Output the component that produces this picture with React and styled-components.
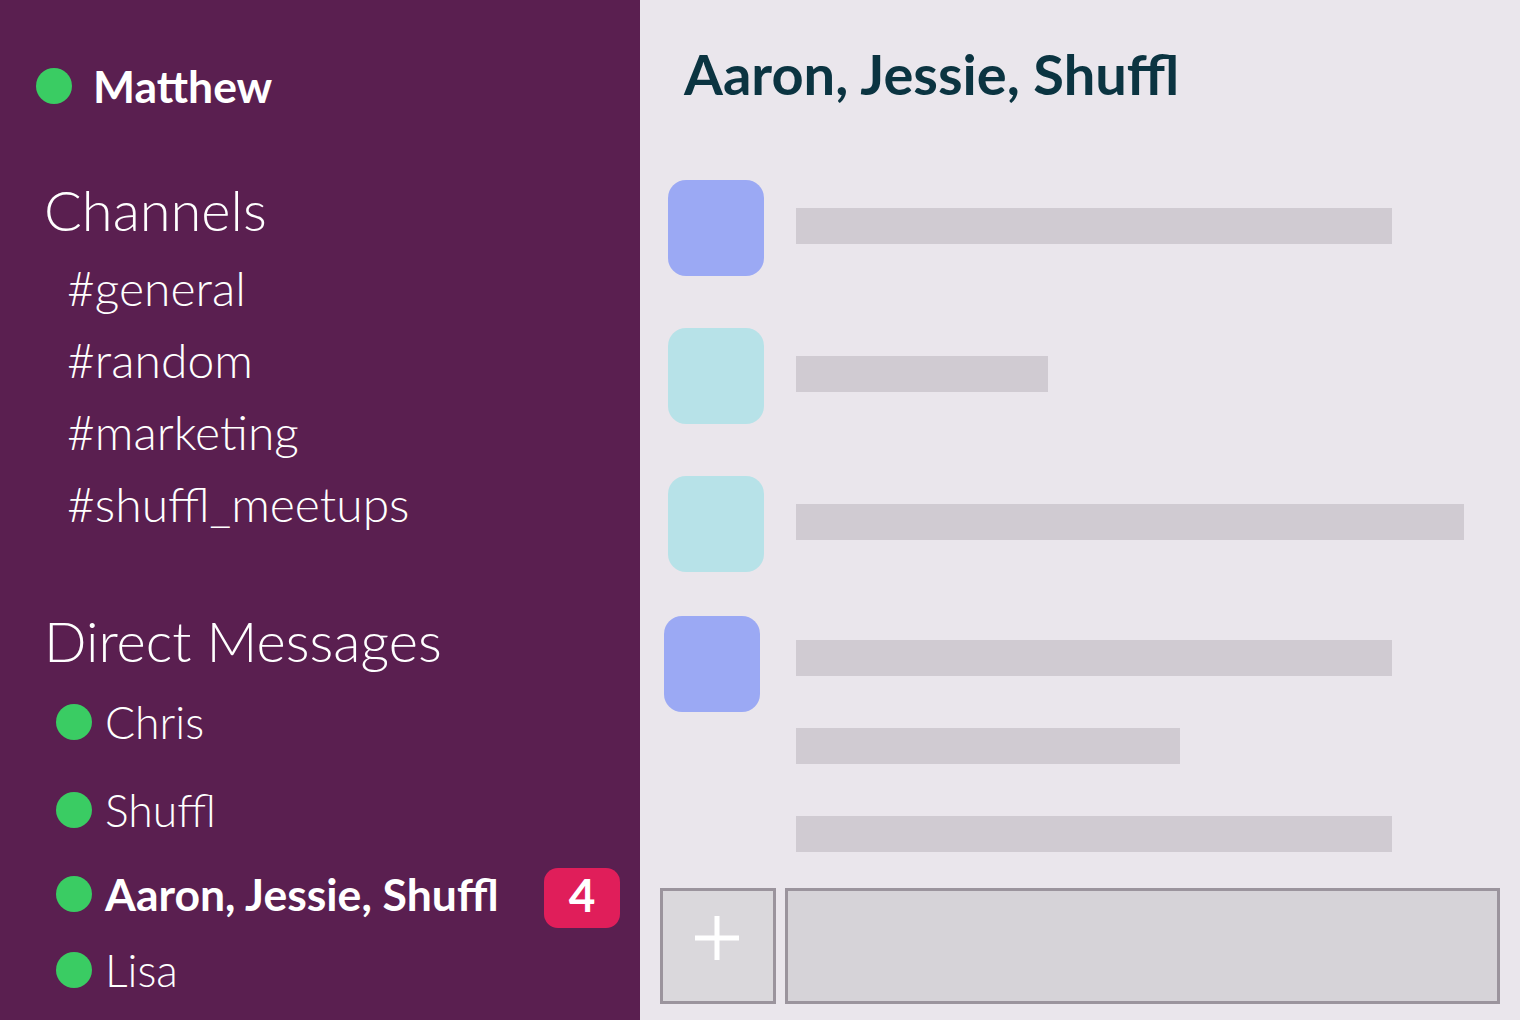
import styled, { createGlobalStyle } from "styled-components";

const GlobalStyle = createGlobalStyle`
  html, body {
    margin: 0;
    padding: 0;
    background: #eae6ec;
  }
  body {
    font-family: Lato, "Noto Sans", sans-serif;
  }
`;

const Layout = styled.div`
  display: flex;
  width: 1520px;
  height: 1020px;
  overflow: hidden;
`;

const Sidebar = styled.aside`
  width: 640px;
  flex-shrink: 0;
  box-sizing: border-box;
  background: #5a1f50;
  color: #fff;
  padding: 68px 20px 0 44px;
  display: flex;
  flex-direction: column;
`;

const UserRow = styled.div`
  display: flex;
  align-items: center;
  gap: 21px;
  height: 36px;
  margin-left: -8px;
`;

const Dot = styled.span`
  width: 36px;
  height: 36px;
  border-radius: 50%;
  background: #3acc63;
  flex-shrink: 0;
`;

const UserName = styled.span`
  font-size: 44.5px;
  font-weight: 700;
  line-height: 36px;
`;

const SectionTitle = styled.h2`
  margin: ${(p) => p.$top}px 0 0;
  font-size: 56px;
  font-weight: 300;
  line-height: 64px;
`;

const ChannelList = styled.ul`
  list-style: none;
  margin: 10px 0 0;
  padding: 0 0 0 23px;
`;

const Channel = styled.li`
  font-size: 48px;
  font-weight: 300;
  line-height: 72px;
`;

const DmRow = styled.div`
  display: flex;
  align-items: center;
  gap: 13px;
  height: 36px;
  margin-top: ${(p) => p.$top}px;
  padding-left: 12px;
`;

const DmName = styled.span`
  font-size: 44.5px;
  font-weight: ${(p) => (p.$unread ? 700 : 300)};
  line-height: 36px;
  white-space: nowrap;
`;

const Badge = styled.span`
  margin: -8px 0 -16px auto;
  align-self: flex-start;
  width: 76px;
  height: 60px;
  box-sizing: border-box;
  padding-bottom: 7px;
  border-radius: 14px;
  background: #e01e5a;
  color: #fff;
  font-size: 46px;
  font-weight: 700;
  display: flex;
  align-items: center;
  justify-content: center;
`;

const Main = styled.main`
  flex: 1;
  display: flex;
  flex-direction: column;
  padding: 42px 20px 16px;
`;

const Title = styled.h1`
  margin: 0;
  padding-left: 24px;
  font-size: 56px;
  font-weight: 700;
  line-height: 64px;
  color: #0b3441;
`;

const Messages = styled.div`
  flex: 1;
  display: flex;
  flex-direction: column;
  padding: 74px 0 0 8px;
`;

const Message = styled.div`
  display: flex;
  gap: 32px;
  margin-top: ${(p) => p.$top}px;
  margin-left: ${(p) => p.$shift || 0}px;
`;

const Avatar = styled.div`
  width: 96px;
  height: 96px;
  border-radius: 18px;
  flex-shrink: 0;
  background: ${(p) => (p.$tone === "blue" ? "#9ba9f4" : "#b7e2e8")};
`;

const Lines = styled.div`
  display: flex;
  flex-direction: column;
  gap: 52px;
  padding-top: ${(p) => p.$top}px;
  margin-left: ${(p) => -(p.$shift || 0)}px;
`;

const Line = styled.div`
  height: 36px;
  background: #d0cbd2;
`;

const Composer = styled.div`
  display: flex;
  gap: 9px;
  height: 116px;
`;

const AddButton = styled.button`
  width: 116px;
  box-sizing: border-box;
  border: 3px solid #9b949d;
  background: #dad8dc;
  padding: 0 2px 16px 0;
  display: flex;
  align-items: center;
  justify-content: center;
`;

const TextBox = styled.div`
  flex: 1;
  box-sizing: border-box;
  border: 3px solid #9b949d;
  background: #d6d3d8;
`;

function PlusIcon() {
  return (
    <svg width="44" height="44" viewBox="0 0 44 44">
      <rect x="19.5" y="0" width="5" height="44" fill="#fff" />
      <rect x="0" y="19.5" width="44" height="5" fill="#fff" />
    </svg>
  );
}

const channels = ["#general", "#random", "#marketing", "#shuffl_meetups"];

const dms = [
  { name: "Chris", top: 31 },
  { name: "Shuffl", top: 52 },
  { name: "Aaron, Jessie, Shuffl", top: 48, unread: 4 },
  { name: "Lisa", top: 40 },
];

const messages = [
  { tone: "blue", top: 0, lines: [596] },
  { tone: "cyan", top: 52, lines: [252] },
  { tone: "cyan", top: 52, lines: [668] },
  { tone: "blue", top: 44, shift: -4, pad: 24, lines: [596, 384, 596] },
];

export default function App() {
  return (
    <>
      <GlobalStyle />
      <Layout>
        <Sidebar>
          <UserRow>
            <Dot />
            <UserName>Matthew</UserName>
          </UserRow>
          <SectionTitle $top={74}>Channels</SectionTitle>
          <ChannelList>
            {channels.map((c) => (
              <Channel key={c}>{c}</Channel>
            ))}
          </ChannelList>
          <SectionTitle $top={69}>Direct Messages</SectionTitle>
          {dms.map((dm) => (
            <DmRow key={dm.name} $top={dm.top}>
              <Dot />
              <DmName $unread={!!dm.unread}>{dm.name}</DmName>
              {dm.unread && <Badge>{dm.unread}</Badge>}
            </DmRow>
          ))}
        </Sidebar>
        <Main>
          <Title>Aaron, Jessie, Shuffl</Title>
          <Messages>
            {messages.map((m, i) => (
              <Message key={i} $top={m.top} $shift={m.shift}>
                <Avatar $tone={m.tone} />
                <Lines $top={m.pad ?? 28} $shift={m.shift}>
                  {m.lines.map((w, j) => (
                    <Line key={j} style={{ width: w }} />
                  ))}
                </Lines>
              </Message>
            ))}
          </Messages>
          <Composer>
            <AddButton aria-label="Add">
              <PlusIcon />
            </AddButton>
            <TextBox />
          </Composer>
        </Main>
      </Layout>
    </>
  );
}
